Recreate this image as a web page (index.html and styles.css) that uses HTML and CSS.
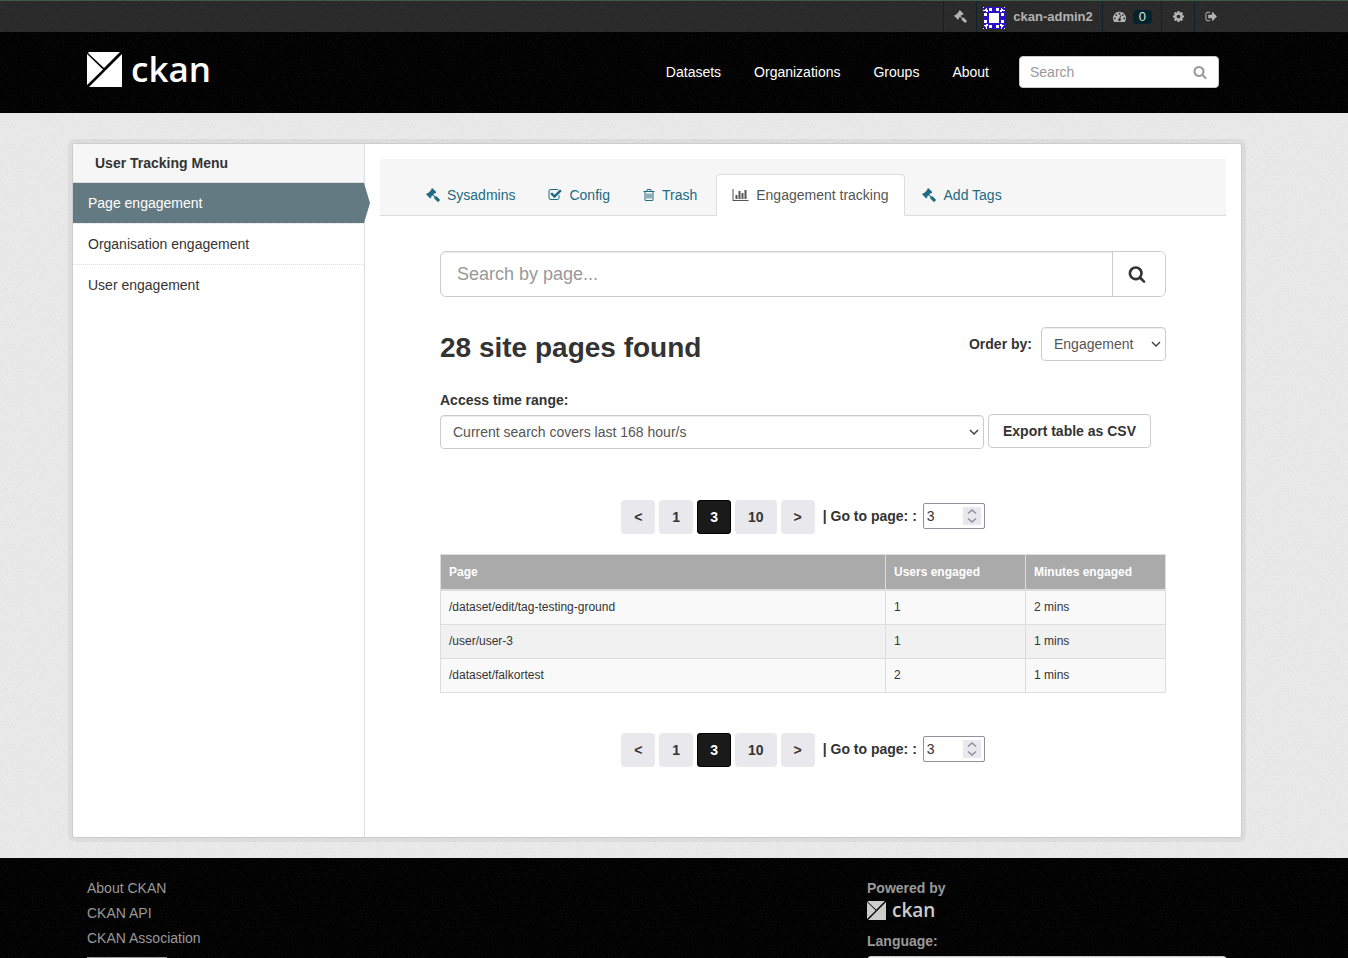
FILE: index.html
```
<!DOCTYPE html>
<html lang="en">
<head>
<meta charset="utf-8">
<title>Engagement tracking - CKAN</title>
<link rel="stylesheet" href="styles.css">
</head>
<body>
<svg class="sprite" aria-hidden="true">
  <symbol id="gavel" viewBox="0 0 1792 1792"><path d="M1771 1536q0 53-37 90l-107 108q-39 37-91 37-53 0-90-37l-363-364q-38-36-38-90 0-53 43-96l-256-256-126 126q-14 14-34 14t-34-14q2 2 12.5 12t12.5 13 10 11.5 10 13.5 6 13.5 5.5 16.5 1.5 18q0 38-28 68-3 3-16.5 18t-19 20.5-18.5 16.5-22 15.5-22 9-26 4.5q-40 0-68-28l-408-408q-28-28-28-68 0-13 4.5-26t9-22 15.5-22 16.5-18.5 20.5-19 18-16.5q30-28 68-28 10 0 18 1.5t16.5 5.5 13.5 6 13.5 10 11.5 10 13 12.5 12 12.5q-14-14-14-34t14-34l348-348q14-14 34-14t34 14q-2-2-12.5-12t-12.5-13-10-11.5-10-13.5-6-13.5-5.5-16.5-1.5-18q0-38 28-68 3-3 16.5-18t19-20.5 18.5-16.5 22-15.5 22-9 26-4.5q40 0 68 28l408 408q28 28 28 68 0 13-4.5 26t-9 22-15.5 22-16.5 18.5-20.5 19-18 16.5q-30 28-68 28-10 0-18-1.5t-16.5-5.5-13.5-6-13.5-10-11.5-10-13-12.5-12-12.5q14 14 14 34t-14 34l-126 126 256 256q43-43 96-43 52 0 91 37l363 363q37 39 37 91z"/></symbol>
  <symbol id="search" viewBox="0 0 1792 1792"><path d="M1216 832q0-185-131.5-316.5t-316.5-131.5-316.5 131.5-131.5 316.5 131.5 316.5 316.5 131.5 316.5-131.5 131.5-316.5zm512 832q0 52-38 90t-90 38q-54 0-90-38l-343-342q-179 124-399 124-143 0-273.5-55.5t-225-150-150-225-55.5-273.5 55.5-273.5 150-225 225-150 273.5-55.5 273.5 55.5 225 150 150 225 55.5 273.5q0 220-124 399l343 343q37 37 37 90z"/></symbol>
  <symbol id="cog" viewBox="0 0 1792 1792"><path d="M1152 896q0-106-75-181t-181-75-181 75-75 181 75 181 181 75 181-75 75-181zm512-109v222q0 12-8 23t-20 13l-185 28q-19 54-39 91 35 50 107 138 10 12 10 25t-9 23q-27 37-99 108t-94 71q-12 0-26-9l-138-108q-44 23-91 38-16 136-29 186-7 28-36 28h-222q-14 0-24.500-8.500t-11.500-21.500l-28-184q-49-16-90-37l-141 107q-10 9-25 9-14 0-25-11-126-114-165-168-7-10-7-23 0-12 8-23 15-21 51-66.500t54-70.500q-27-50-41-99l-183-27q-13-2-21-12.500t-8-23.500v-222q0-12 8-23t19-13l186-28q14-46 39-92-40-57-107-138-10-12-10-24 0-10 9-23 26-36 98.500-107.500t94.500-71.500q13 0 26 10l138 107q44-23 91-38 16-136 29-186 7-28 36-28h222q14 0 24.500 8.500t11.500 21.500l28 184q49 16 90 37l142-107q9-9 24-9 13 0 25 10 129 119 165 170 7 8 7 22 0 12-8 23-15 21-51 66.500t-54 70.500q26 50 41 98l183 28q13 2 21 12.500t8 23.500z"/></symbol>
  <symbol id="sign-out" viewBox="0 0 1792 1792"><path d="M704 1440q0 4 1 20t.5 26.500-3 23.500-10 19.500-20.500 6.500h-320q-119 0-203.500-84.500t-84.500-203.500v-704q0-119 84.500-203.500t203.500-84.500h320q13 0 22.500 9.500t9.500 22.500q0 4 1 20t.5 26.500-3 23.500-10 19.500-20.500 6.500h-320q-66 0-113 47t-47 113v704q0 66 47 113t113 47h312l11.500 1 11.500 3 8 5.500 7 9 2 13.500zm928-544q0 26-19 45l-544 544q-19 19-45 19t-45-19-19-45v-288h-448q-26 0-45-19t-19-45v-384q0-26 19-45t45-19h448v-288q0-26 19-45t45-19 45 19l544 544q19 19 19 45z"/></symbol>
  <symbol id="dashboard" viewBox="0 0 1792 1792"><path d="M384 1152q0-53-37.500-90.500t-90.500-37.500-90.500 37.500-37.500 90.500 37.500 90.500 90.500 37.500 90.500-37.500 37.500-90.500zm192-448q0-53-37.500-90.500t-90.500-37.500-90.500 37.500-37.500 90.500 37.500 90.500 90.500 37.500 90.500-37.500 37.500-90.500zm428 481l101-382q6-26-7.500-48.500t-38.500-29.500-48 6.500-30 39.500l-101 382q-60 5-107 43.500t-63 98.500q-20 77 20 146t117 89 146-20 89-117q16-60-6-117t-72-91zm660-33q0-53-37.500-90.500t-90.500-37.500-90.500 37.500-37.500 90.500 37.500 90.500 90.500 37.500 90.500-37.500 37.500-90.500zm-640-640q0-53-37.500-90.500t-90.500-37.500-90.500 37.500-37.500 90.500 37.500 90.500 90.500 37.500 90.500-37.500 37.500-90.500zm448 192q0-53-37.500-90.500t-90.500-37.500-90.500 37.500-37.500 90.500 37.500 90.500 90.500 37.500 90.500-37.500 37.500-90.500zm320 448q0 261-141 483-19 29-54 29h-1402q-35 0-54-29-141-221-141-483 0-182 71-348t191-286 286-191 348-71 348 71 286 191 191 286 71 348z"/></symbol>
  <symbol id="check" viewBox="0 0 1792 1792"><path d="M1472 930v318q0 119-84.500 203.500t-203.500 84.500h-832q-119 0-203.500-84.500t-84.500-203.500v-832q0-119 84.500-203.500t203.500-84.500h832q63 0 117 25 15 7 18 23 3 17-9 29l-49 49q-10 10-23 10-3 0-9-2-23-6-45-6h-832q-66 0-113 47t-47 113v832q0 66 47 113t113 47h832q66 0 113-47t47-113v-254q0-13 9-22l64-64q10-10 23-10 6 0 12 3 20 8 20 29zm231-489l-814 814q-24 24-57 24t-57-24l-430-430q-24-24-24-57t24-57l110-110q24-24 57-24t57 24l263 263 647-647q24-24 57-24t57 24l110 110q24 24 24 57t-24 57z"/></symbol>
  <symbol id="trash" viewBox="192 0 1408 1792"><path d="M704 736v576q0 14-9 23t-23 9h-64q-14 0-23-9t-9-23v-576q0-14 9-23t23-9h64q14 0 23 9t9 23zm256 0v576q0 14-9 23t-23 9h-64q-14 0-23-9t-9-23v-576q0-14 9-23t23-9h64q14 0 23 9t9 23zm256 0v576q0 14-9 23t-23 9h-64q-14 0-23-9t-9-23v-576q0-14 9-23t23-9h64q14 0 23 9t9 23zm128 724v-948h-896v948q0 22 7 40.500t14.500 27 10.500 8.500h832q3 0 10.500-8.500t14.500-27 7-40.500zm-672-1076h448l-48-117q-7-9-17-11h-317q-10 2-17 11zm928 32v64q0 14-9 23t-23 9h-96v948q0 83-47 143.500t-113 60.500h-832q-66 0-113-58.500t-47-141.500v-952h-96q-14 0-23-9t-9-23v-64q0-14 9-23t23-9h309l70-167q15-37 54-63t79-26h320q40 0 79 26t54 63l70 167h309q14 0 23 9t9 23z"/></symbol>
  <symbol id="chart" viewBox="0 0 2048 1792"><path d="M640 896v512h-256v-512h256zm384-512v1024h-256v-1024h256zm1024 1152v128h-2048v-1536h128v1408h1920zm-640-896v768h-256v-768h256zm384-384v1152h-256v-1152h256z"/></symbol>
  <symbol id="mark" viewBox="0 0 35 35"><path d="M2 0h31L17 16 1 1zM0 2l16 15.500L0 33zM35 2v33H2z"/></symbol>
  <symbol id="spin" viewBox="0 0 18 18"><path d="M5 6.500l4-3.500 4 3.500M5 11.500l4 3.500 4-3.500" fill="none" stroke="#8f8f9d" stroke-width="1.600"/></symbol>
</svg>

<div class="account">
  <div class="container">
    <ul class="account-list">
      <li><a href="#" aria-label="Sysadmin settings"><svg class="icon"><use href="#gavel"/></svg></a></li>
      <li class="user"><a href="#">
        <svg class="avatar" viewBox="0 0 22 22" shape-rendering="crispEdges"><path fill="#fff" d="M0 0h22v22H0z"/><path fill="#2712c8" d="M4 0h14v4h4v14h-4v4H4v-4H0V4h4z"/><path fill="#fff" d="M6 6h10v10H6zM6 1h3v3H6zM13 1h3v3h-3zM6 18h3v3H6zM13 18h3v3h-3zM1 6h3v3H1zM1 13h3v3H1zM18 6h3v3h-3zM18 13h3v3h-3zM3 3h2v2H3zM17 3h2v2h-2zM3 17h2v2H3zM17 17h2v2h-2z"/><path stroke="#2712c8" stroke-width="1.500" d="M0 3l3-3M19 0l3 3M0 19l3 3M22 19l-3 3"/></svg>
        <span>ckan-admin2</span></a></li>
      <li><a href="#" aria-label="Dashboard"><svg class="icon"><use href="#dashboard"/></svg><span class="badge">0</span></a></li>
      <li><a href="#" aria-label="Profile settings"><svg class="icon"><use href="#cog"/></svg></a></li>
      <li><a href="#" aria-label="Log out"><svg class="icon"><use href="#sign-out"/></svg></a></li>
    </ul>
  </div>
</div>

<header class="masthead">
  <div class="container masthead-row">
    <a class="logo" href="#"><svg class="logo-mark"><use href="#mark"/></svg><span>ckan</span></a>
    <nav class="main-nav">
      <a href="#">Datasets</a><a href="#">Organizations</a><a href="#">Groups</a><a href="#">About</a>
    </nav>
    <form class="site-search">
      <input type="text" placeholder="Search" aria-label="Search datasets">
      <button type="button" aria-label="Search"><svg class="icon"><use href="#search"/></svg></button>
    </form>
  </div>
</header>

<main class="main">
  <div class="wrapper">
    <aside class="sidebar">
      <h2>User Tracking Menu</h2>
      <nav>
        <a class="active" href="#">Page engagement</a>
        <a href="#">Organisation engagement</a>
        <a href="#">User engagement</a>
      </nav>
    </aside>
    <div class="primary">
      <nav class="tabs">
        <a href="#"><svg class="icon"><use href="#gavel"/></svg>Sysadmins</a>
        <a href="#"><svg class="icon"><use href="#check"/></svg>Config</a>
        <a href="#"><svg class="icon narrow"><use href="#trash"/></svg>Trash</a>
        <a class="active" href="#"><svg class="icon wide"><use href="#chart"/></svg>Engagement tracking</a>
        <a href="#"><svg class="icon"><use href="#gavel"/></svg>Add Tags</a>
      </nav>
      <section class="content">
        <form class="page-search">
          <input type="text" placeholder="Search by page..." aria-label="Search by page">
          <button type="button" aria-label="Search"><svg class="icon"><use href="#search"/></svg></button>
        </form>
        <div class="heading">
          <h1>28 site pages found</h1>
          <div class="order">
            <label for="order">Order by:</label>
            <select id="order"><option>Engagement</option></select>
          </div>
        </div>
        <label class="range-label" for="range">Access time range:</label>
        <div class="range">
          <select id="range"><option>Current search covers last 168 hour/s</option></select>
          <button type="button">Export table as CSV</button>
        </div>
        <div class="pagination">
          <a href="#">&lt;</a><a href="#">1</a><a class="active" href="#">3</a><a href="#">10</a><a href="#">&gt;</a>
          <label for="goto-top">| Go to page: :</label>
          <span class="number"><input id="goto-top" type="number" value="3"><svg><use href="#spin"/></svg></span>
        </div>
        <table>
          <thead><tr><th>Page</th><th class="metric">Users engaged</th><th class="metric">Minutes engaged</th></tr></thead>
          <tbody>
            <tr><td>/dataset/edit/tag-testing-ground</td><td>1</td><td>2 mins</td></tr>
            <tr><td>/user/user-3</td><td>1</td><td>1 mins</td></tr>
            <tr><td>/dataset/falkortest</td><td>2</td><td>1 mins</td></tr>
          </tbody>
        </table>
        <div class="pagination">
          <a href="#">&lt;</a><a href="#">1</a><a class="active" href="#">3</a><a href="#">10</a><a href="#">&gt;</a>
          <label for="goto-bottom">| Go to page: :</label>
          <span class="number"><input id="goto-bottom" type="number" value="3"><svg><use href="#spin"/></svg></span>
        </div>
      </section>
    </div>
  </div>
</main>

<footer class="footer">
  <div class="container footer-row">
    <div class="footer-links">
      <a href="#">About CKAN</a>
      <a href="#">CKAN API</a>
      <a href="#">CKAN Association</a>
      <span class="open-data"></span>
    </div>
    <div class="attribution">
      <strong>Powered by</strong>
      <a class="logo small" href="#"><svg class="logo-mark"><use href="#mark"/></svg><span>ckan</span></a>
      <label for="language">Language:</label>
      <select id="language"><option></option></select>
    </div>
  </div>
</footer>
</body>
</html>
```

FILE: styles.css
```
:root {
  --noise: url("data:image/svg+xml,%3Csvg xmlns='http://www.w3.org/2000/svg' width='100' height='100'%3E%3Cfilter id='n'%3E%3CfeTurbulence type='fractalNoise' baseFrequency='.6' numOctaves='2' stitchTiles='stitch'/%3E%3CfeColorMatrix values='0 0 0 0 1 0 0 0 0 1 0 0 0 0 1 1 0 0 0 -.35'/%3E%3C/filter%3E%3Crect width='100' height='100' filter='url(%23n)' opacity='.07'/%3E%3C/svg%3E");
  --noise-light: url("data:image/svg+xml,%3Csvg xmlns='http://www.w3.org/2000/svg' width='100' height='100'%3E%3Cfilter id='n'%3E%3CfeTurbulence type='fractalNoise' baseFrequency='.6' numOctaves='2' stitchTiles='stitch'/%3E%3CfeColorMatrix values='0 0 0 0 1 0 0 0 0 1 0 0 0 0 1 1 0 0 0 -.2'/%3E%3C/filter%3E%3Crect width='100' height='100' filter='url(%23n)' opacity='.5'/%3E%3C/svg%3E");
}
* { box-sizing: border-box; }
body {
  margin: 0;
  background: #000 var(--noise);
  color: #333;
  font: 14px/20px "Liberation Sans", Arial, sans-serif;
}
a { color: inherit; text-decoration: none; }
input, select, button { font: inherit; color: inherit; }
::placeholder { color: #999; opacity: 1; }
.sprite { position: absolute; width: 0; height: 0; }
.icon { width: 14px; height: 14px; fill: currentColor; flex: none; }
.account, .masthead, .main, .footer { padding-right: 34px; }
.container, .wrapper { max-width: 1170px; margin: 0 auto; }
.container { padding: 0 15px; }

.account { background: #282828 var(--noise); border-top: 1px solid #3d5c48; color: #b3b3b3; font-weight: bold; font-size: 13px; }
.account-list { display: flex; justify-content: flex-end; margin: 0; padding: 0; list-style: none; }
.account-list li { border-left: 1px solid #0c2429; }
.account-list a { display: flex; align-items: center; height: 31px; padding: 0 9px 0 10px; }
.account-list .user a { padding: 0 9px 0 6px; gap: 8px; }
.account .icon { width: 13px; height: 13px; }
.avatar { width: 22px; height: 22px; margin-top: 2px; }
.badge { margin-left: 7px; padding: 0 6px; border-radius: 4px; background: #05232b; color: #dce6e8; font-weight: normal; line-height: 14px; }

.masthead { color: #fff; }
.masthead-row { display: flex; align-items: center; min-height: 81px; padding-bottom: 2px; }
.logo { display: flex; align-items: center; gap: 9px; margin-right: auto; margin-bottom: 4px; font: 600 35px/40px "Open Sans", "Noto Sans", sans-serif; }
.logo-mark { width: 35px; height: 35px; fill: currentColor; }
.logo span { margin-top: -2px; }
.main-nav { display: flex; gap: 33px; margin-right: 30px; }
.site-search { display: flex; align-items: center; width: 200px; height: 32px; margin-right: 8px; border: 1px solid #ccc; border-radius: 4px; background: #fff; }
.site-search input { flex: 1; min-width: 0; padding: 0 10px; border: 0; background: none; color: #555; outline: 0; }
.site-search button { display: flex; padding: 0 11px; border: 0; background: none; color: #999; }

.main { padding-top: 30px; padding-bottom: 20px; background: #e4e4e4 var(--noise-light); }
.wrapper { display: flex; border: 1px solid #ccc; border-radius: 3px; background: #fff; box-shadow: 0 0 0 4px rgba(0, 0, 0, .05); }
.sidebar { width: 25%; border-right: 1px solid #ddd; }
.sidebar h2 { margin: 0; padding: 9px 22px; border-bottom: 1px solid #ddd; background: #f6f6f6; font-size: 14px; line-height: 20px; }
.sidebar nav a { display: block; padding: 10px 15px; border-bottom: 1px dotted #ddd; }
.sidebar nav a:last-child { border-bottom: 0; }
.sidebar nav .active { position: relative; background: #647a82 padding-box; color: #fff; }
.sidebar nav .active::after { content: ""; position: absolute; top: 0; bottom: 0; left: 100%; width: 6px; background: #647a82; clip-path: polygon(0 0, 100% 50%, 0 100%); }
.primary { flex: 1; padding: 15px; }

.tabs { display: flex; padding: 15px 30px 0; border-bottom: 1px solid #ddd; background: #f6f6f6; color: #206b82; }
.tabs a { display: flex; align-items: center; gap: 7px; margin: 0 1px -1px 0; padding: 10px 15px; border: 1px solid transparent; border-radius: 4px 4px 0 0; }
.tabs .active { margin-left: 2px; border-color: #ddd #ddd #fff; background: #fff; color: #555; }
.tabs .active + a { gap: 8px; }
.tabs .narrow { width: 12px; }
.tabs .wide { width: 17px; }

.content { padding: 35px 60px 55px; }
.page-search { display: flex; height: 46px; border: 1px solid #ccc; border-radius: 6px; box-shadow: inset 0 1px 1px rgba(0, 0, 0, .075); font-size: 18px; }
.page-search input { flex: 1; min-width: 0; padding: 0 16px; border: 0; background: none; outline: 0; }
.page-search button { display: flex; align-items: center; justify-content: center; width: 53px; padding: 0 4px 0 0; border: 0; border-left: 1px solid #ccc; border-radius: 0 5px 5px 0; background: #fff; }
.page-search .icon { width: 18px; height: 18px; }
.heading { display: flex; align-items: center; justify-content: space-between; margin-top: 30px; }
h1 { margin: 0; font-size: 28px; line-height: 34px; }
.order { display: flex; align-items: center; gap: 9px; margin-bottom: 8px; }
label { font-weight: bold; }
select {
  appearance: none; height: 34px; padding: 0 30px 0 12px; border: 1px solid #ccc; border-radius: 4px; color: #555;
  background: #fff url("data:image/svg+xml,%3Csvg xmlns='http://www.w3.org/2000/svg' width='10' height='6'%3E%3Cpath d='M1 1l4 4 4-4' fill='none' stroke='%23444' stroke-width='1.500'/%3E%3C/svg%3E") no-repeat right 4px center;
  box-shadow: inset 0 1px 1px rgba(0, 0, 0, .075);
}
.order select { width: 125px; }
.range-label { display: block; margin-top: 21px; }
.range { display: flex; align-items: flex-start; gap: 4px; padding: 4px 15px 0 0; }
.range select { flex: 1; min-width: 0; margin-top: 1px; }
.range button { min-width: 163px; height: 34px; padding: 0 12px; border: 1px solid #ccc; border-radius: 4px; background: #fff; font-weight: bold; }
.pagination { display: flex; align-items: center; justify-content: center; gap: 4px; margin-top: 51px; font-weight: bold; }
.pagination a { padding: 7px 13px; border-radius: 4px; background: #e9e9ed; }
.pagination .active { background: #1a1a1a; box-shadow: inset 0 0 0 1px #000; color: #fff; }
.pagination label { margin: 0 2px 2px 4px; }
.number { position: relative; display: flex; margin-bottom: 2px; }
.number input { appearance: textfield; width: 62px; height: 26px; padding: 0 3px; border: 1px solid #8f8f9d; border-radius: 2px; font-weight: normal; }
.number input::-webkit-inner-spin-button { appearance: none; }
.number svg { position: absolute; top: 4px; right: 4px; width: 18px; height: 18px; background: #e9e9ed; pointer-events: none; }

table { width: 100%; margin-top: 20px; border-collapse: collapse; font-size: 12px; line-height: 17px; }
th, td { padding: 8px; border: 1px solid #ddd; text-align: left; }
th { padding-top: 9px; border-bottom-width: 2px; background: #aaa; color: #fff; }
.metric { width: 140px; }
tbody tr:nth-child(odd) { background: #f9f9f9; }
tbody tr:nth-child(even) { background: #f1f1f1; }
table + .pagination { margin-top: 40px; }

.footer { color: #999; }
.footer-row { display: flex; justify-content: space-between; padding-top: 20px; }
.footer-links { display: flex; flex-direction: column; gap: 5px; }
.open-data { width: 80px; height: 15px; margin-top: 4px; background: #999; }
.attribution { display: flex; flex-direction: column; width: 360px; }
.small { gap: 6px; margin: 3px 0 11px; color: #ccc; font-size: 19px; line-height: 20px; }
.small .logo-mark { width: 19px; height: 19px; }
.attribution select { margin-top: 5px; }
```
